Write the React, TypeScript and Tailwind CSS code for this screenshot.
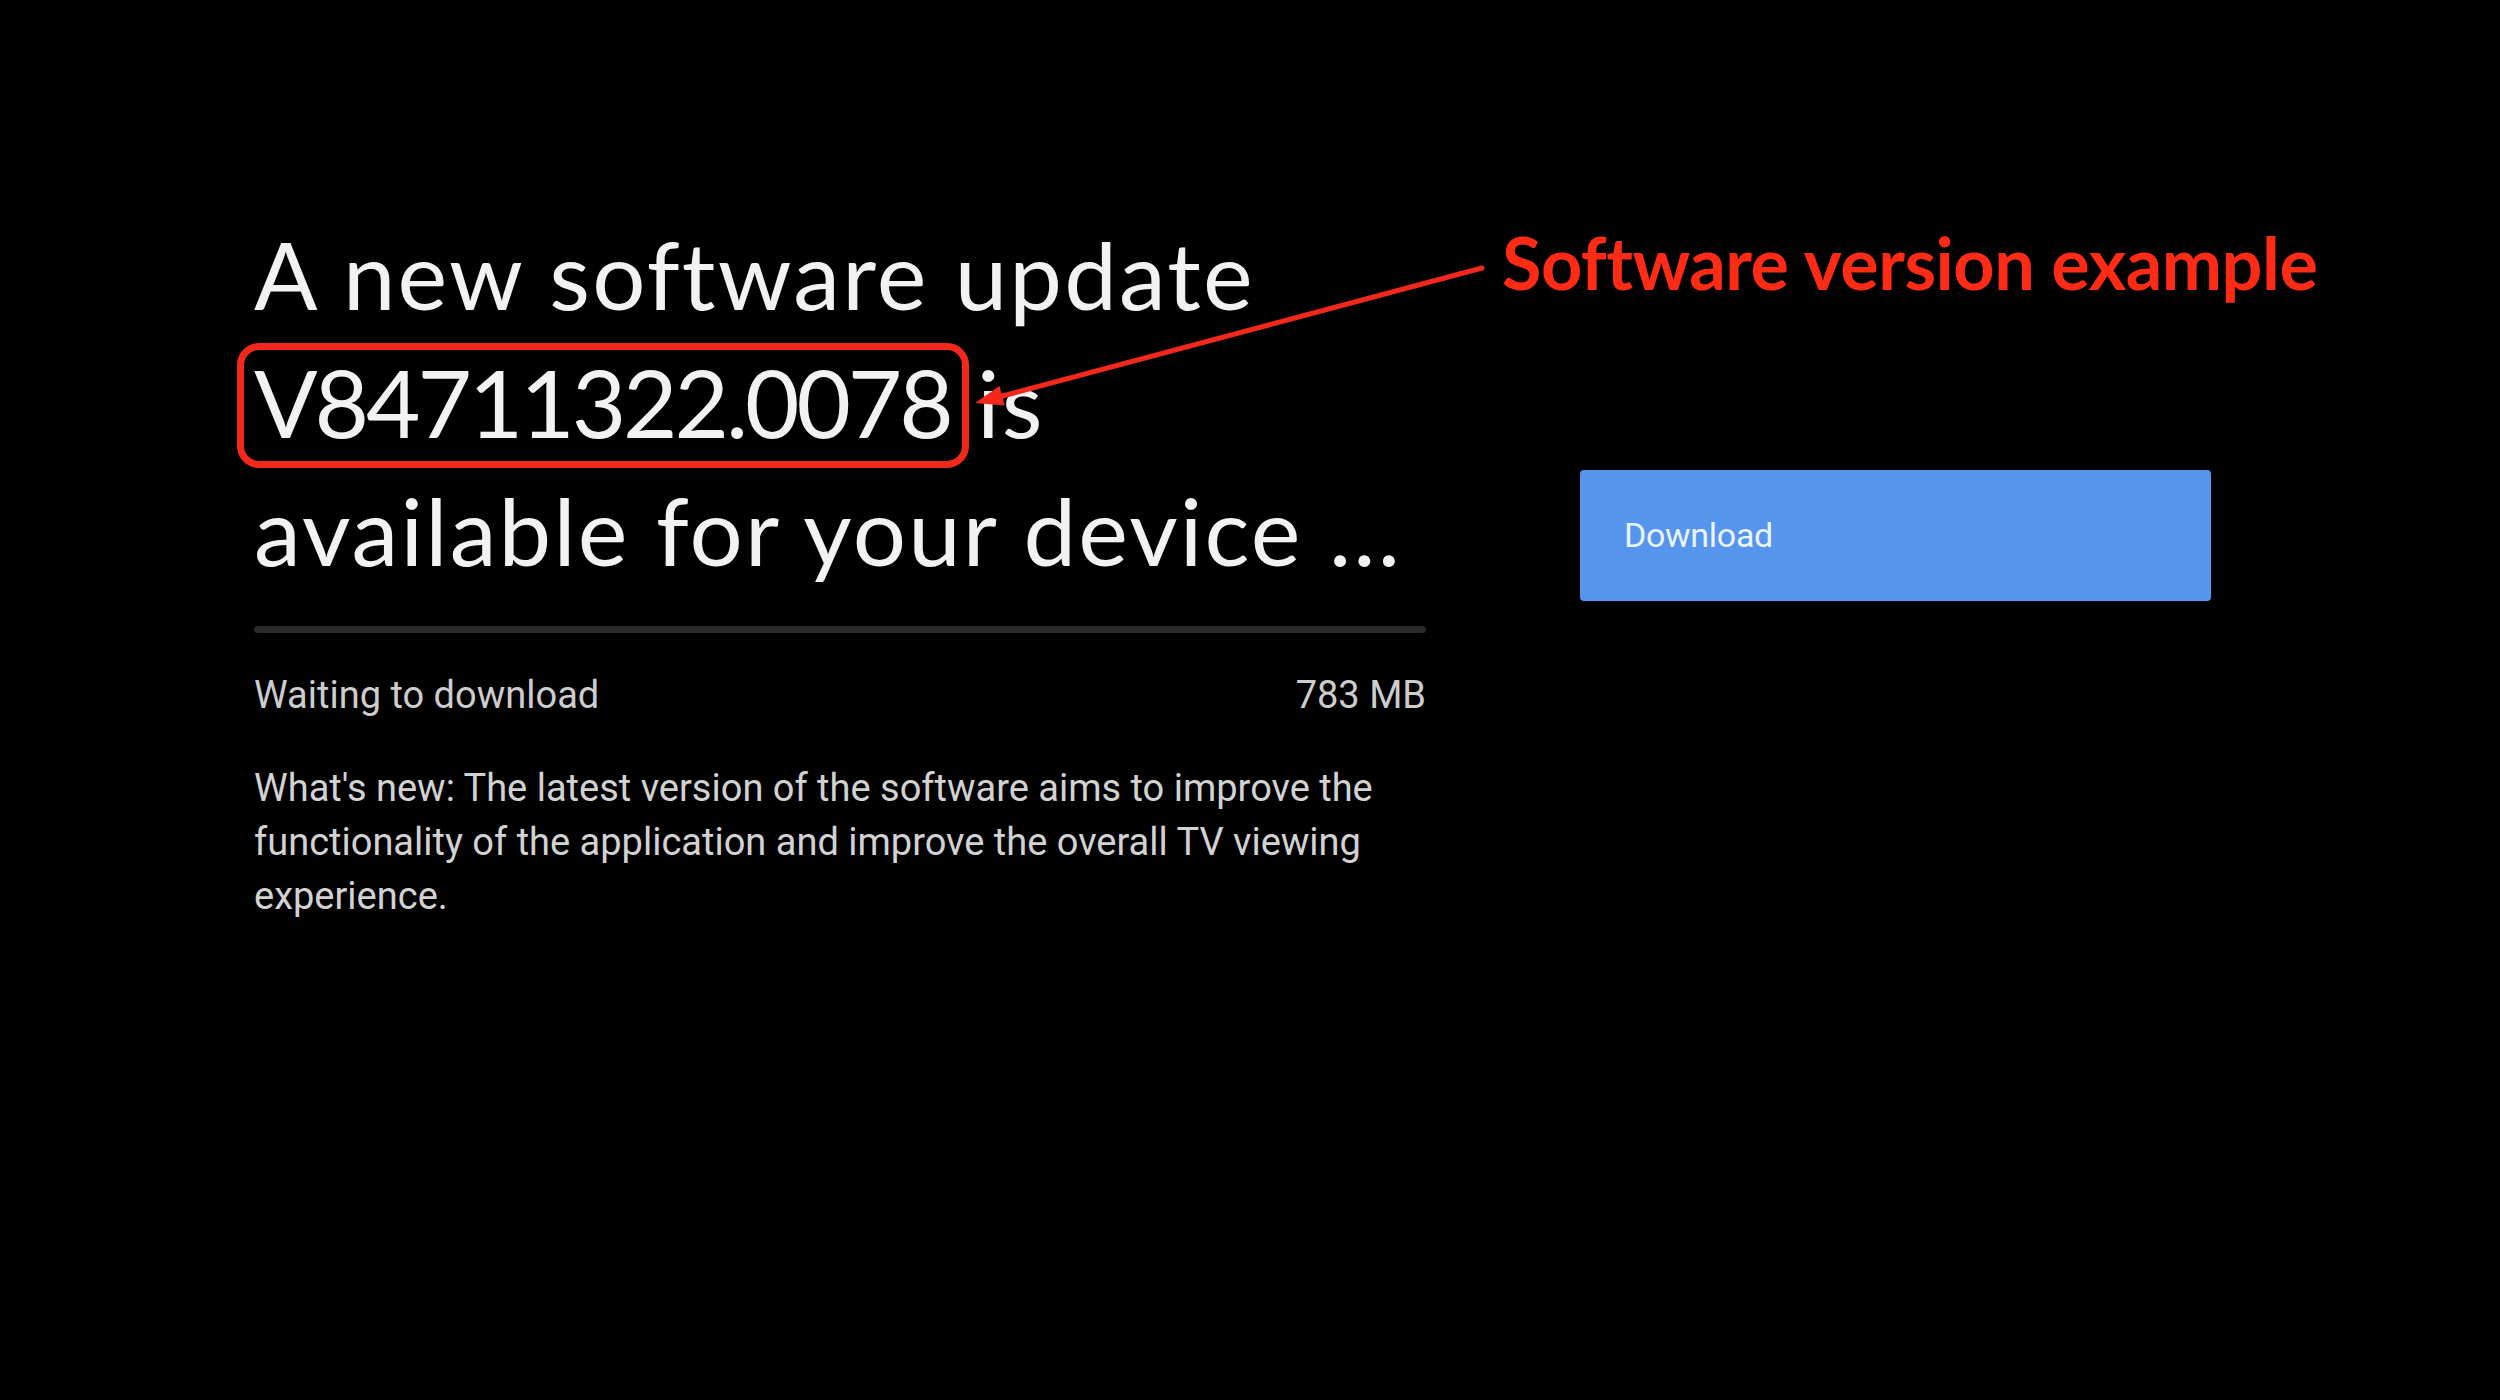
import React from 'react';

const paragraph =
  "What's new: The latest version of the software aims to improve the functionality of the application and improve the overall TV viewing experience.";

export default function App() {
  return (
    <div className="relative w-[2500px] h-[1400px] overflow-hidden bg-black">
      <div className="flex pl-[254px] pt-[210px]">
        {/* Update info */}
        <div className="w-[1172px]">
          <h1 className="font-['Lato',sans-serif] text-[94px] leading-[128px] font-normal tracking-[2.2px] text-[#f2f2f2]">
            A new software update
            <br />
            <span className="relative tracking-[-3.1px]">
              V84711322.0078
              <span className="absolute -left-[17px] -right-[18px] -top-[2px] -bottom-[10px] rounded-[22px] border-[7px] border-[#f2291a]" />
            </span>{' '}
            is
            <br />
            available for your device ...
          </h1>

          <div className="mt-[32px] h-[7px] rounded-full bg-[#2a2a2a]" />

          <div className="mt-[38px] flex justify-between font-['Roboto',sans-serif] text-[38px] leading-[48px] text-[#cdcdcd]">
            <span>Waiting to download</span>
            <span>783 MB</span>
          </div>

          <p className="mt-[42px] font-['Roboto',sans-serif] text-[38px] leading-[54px] text-[#d2d2d2]">
            {paragraph}
          </p>
        </div>

        {/* Action */}
        <div className="ml-[154px] mt-[260px]">
          <button className="flex h-[131px] w-[631px] items-center rounded-[4px] bg-[#5595ee] pl-[44px] font-['Roboto',sans-serif] text-[34px] tracking-[-0.3px] text-[#eaf4ff]">
            Download
          </button>
        </div>
      </div>

      {/* Annotation */}
      <svg className="pointer-events-none absolute inset-0" width="2500" height="1400" viewBox="0 0 2500 1400">
        <line x1="1482" y1="268" x2="995" y2="398" stroke="#f2291a" strokeWidth="5" strokeLinecap="round" />
        <polygon points="975,403 1004.6,405.5 999.5,386.1" fill="#f2291a" />
      </svg>
      <div className="absolute left-[1502px] top-[226px] font-['Lato',sans-serif] text-[72px] leading-none font-bold tracking-[-0.5px] text-[#ff2b14]">
        Software version example
      </div>
    </div>
  );
}
